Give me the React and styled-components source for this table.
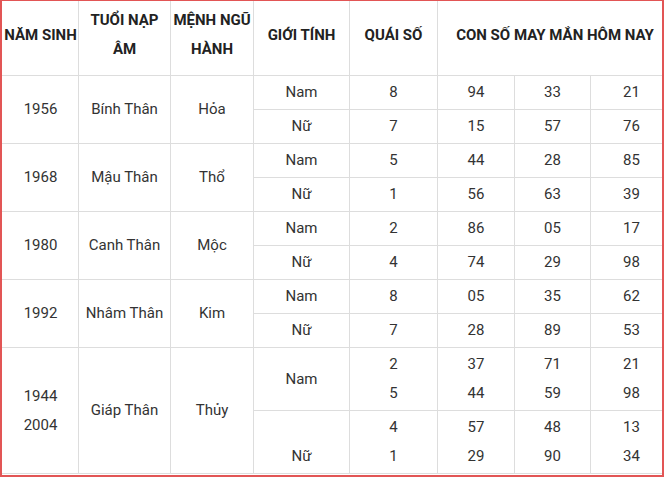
import React from 'react';
import styled, { createGlobalStyle } from 'styled-components';

const GlobalStyle = createGlobalStyle`
  html, body {
    margin: 0;
    padding: 0;
    background: #ffffff;
  }
  body {
    font-family: Roboto, "Liberation Sans", Arial, sans-serif;
  }
`;

//#region 外框
const Frame = styled.div`
  width: 664px;
  height: 477px;
  box-sizing: border-box;
  border: 2px solid #e25555;
  border-top-width: 1px;
  overflow: hidden;
  background: #ffffff;
`;
//#endregion

//#region 表格
const Table = styled.table`
  width: 670px;
  border-collapse: collapse;
  table-layout: fixed;
  font-size: 15px;
  line-height: 29px;
  color: #333333;
  margin-top: -1px;
`;

const HeadCell = styled.th`
  border: 1px solid #dddddd;
  border-top-color: transparent;
  border-left-color: ${p => (p.$first ? 'transparent' : '#dddddd')};
  height: 75px;
  padding: 0 0 6px;
  box-sizing: border-box;
  font-weight: 700;
  color: #222222;
  text-align: center;
  vertical-align: middle;
  text-transform: uppercase;
  white-space: ${p => (p.$nowrap ? 'nowrap' : 'normal')};
`;

const Cell = styled.td`
  border: 1px solid #dddddd;
  border-left-color: ${p => (p.$first ? 'transparent' : '#dddddd')};
  height: ${p => p.$h || 34}px;
  padding: 0 4px;
  box-sizing: border-box;
  text-align: center;
  vertical-align: middle;
`;
//#endregion

const widths = [76, 92, 83, 96, 88, 77, 76, 82];

const groups = [
  {
    year: ['1956'], tuoi: 'Bính Thân', menh: 'Hỏa',
    rows: [
      { gt: ['Nam'], qs: ['8'], nums: [['94', '33', '21']] },
      { gt: ['Nữ'], qs: ['7'], nums: [['15', '57', '76']] },
    ],
  },
  {
    year: ['1968'], tuoi: 'Mậu Thân', menh: 'Thổ',
    rows: [
      { gt: ['Nam'], qs: ['5'], nums: [['44', '28', '85']] },
      { gt: ['Nữ'], qs: ['1'], nums: [['56', '63', '39']] },
    ],
  },
  {
    year: ['1980'], tuoi: 'Canh Thân', menh: 'Mộc',
    rows: [
      { gt: ['Nam'], qs: ['2'], nums: [['86', '05', '17']] },
      { gt: ['Nữ'], qs: ['4'], nums: [['74', '29', '98']] },
    ],
  },
  {
    year: ['1992'], tuoi: 'Nhâm Thân', menh: 'Kim',
    rows: [
      { gt: ['Nam'], qs: ['8'], nums: [['05', '35', '62']] },
      { gt: ['Nữ'], qs: ['7'], nums: [['28', '89', '53']] },
    ],
  },
  {
    year: ['1944', '2004'], tuoi: 'Giáp Thân', menh: 'Thủy',
    rows: [
      { gt: ['Nam'], qs: ['2', '5'], nums: [['37', '71', '21'], ['44', '59', '98']], h: 63 },
      { gt: ['', 'Nữ'], qs: ['4', '1'], nums: [['57', '48', '13'], ['29', '90', '34']], h: 63 },
    ],
  },
];

// 多行文字
const Lines = ({ items }) => (
  <>
    {items.map((t, i) => (
      <React.Fragment key={i}>
        {i > 0 && <br />}
        {t === '' ? '\u00a0' : t}
      </React.Fragment>
    ))}
  </>
);

export default function App() {
  return (
    <>
      <GlobalStyle />
      <Frame>
        <Table>
          <colgroup>
            {widths.map((w, i) => <col key={i} style={{ width: w }} />)}
          </colgroup>
          <thead>
            <tr>
              <HeadCell $first $nowrap>Năm sinh</HeadCell>
              <HeadCell>Tuổi nạp âm</HeadCell>
              <HeadCell>Mệnh ngũ hành</HeadCell>
              <HeadCell>Giới tính</HeadCell>
              <HeadCell>Quái số</HeadCell>
              <HeadCell colSpan={3} $nowrap>Con số may mắn hôm nay</HeadCell>
            </tr>
          </thead>
          <tbody>
            {groups.map((g, gi) =>
              g.rows.map((r, ri) => (
                <tr key={`${gi}-${ri}`}>
                  {ri === 0 && (
                    <>
                      <Cell rowSpan={g.rows.length} $first><Lines items={g.year} /></Cell>
                      <Cell rowSpan={g.rows.length}>{g.tuoi}</Cell>
                      <Cell rowSpan={g.rows.length}>{g.menh}</Cell>
                    </>
                  )}
                  <Cell $h={r.h}><Lines items={r.gt} /></Cell>
                  <Cell $h={r.h}><Lines items={r.qs} /></Cell>
                  {[0, 1, 2].map(c => (
                    <Cell key={c} $h={r.h}>
                      <Lines items={r.nums.map(n => n[c])} />
                    </Cell>
                  ))}
                </tr>
              ))
            )}
          </tbody>
        </Table>
      </Frame>
    </>
  );
}
